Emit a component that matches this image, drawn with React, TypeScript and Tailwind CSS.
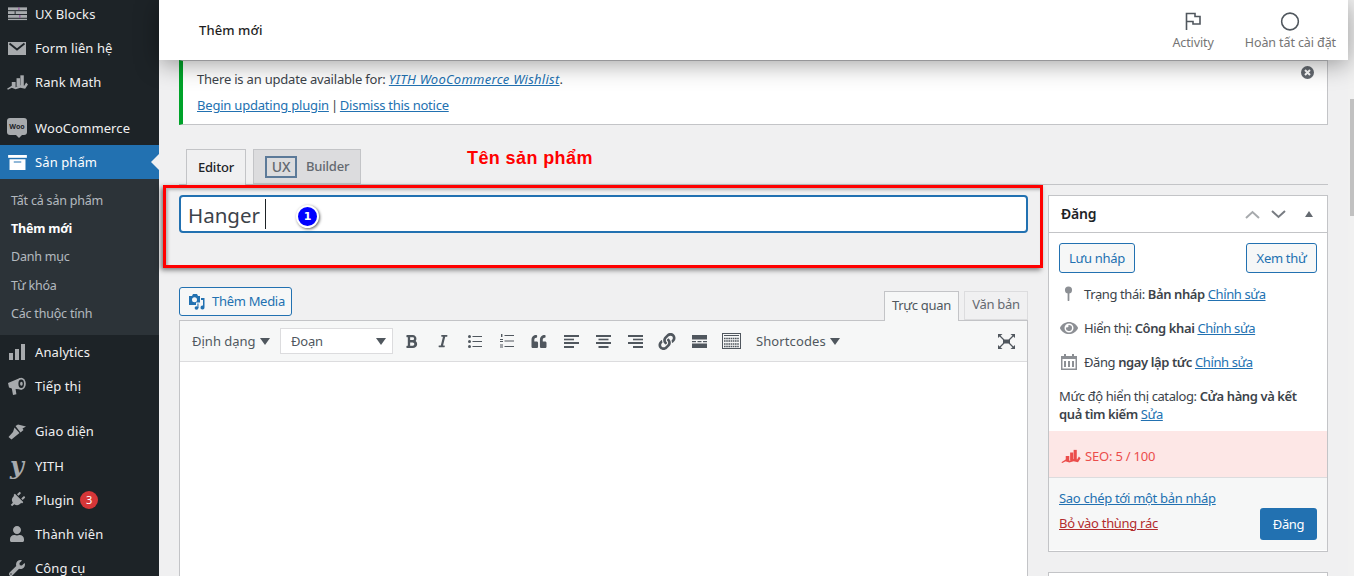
import React from "react";
import { FaBold, FaItalic, FaQuoteLeft, FaLink, FaEye, FaPlug, FaUser, FaWrench } from "react-icons/fa";

type IconProps = { className?: string };

const Bricks = ({ className }: IconProps) => (
  <svg viewBox="0 0 20 14" className={className} fill="currentColor">
    <rect x="0" y="0" width="20" height="3" />
    <rect x="0" y="4" width="20" height="3" />
    <rect x="0" y="8" width="20" height="3" />
    <rect x="0" y="12" width="20" height="1.4" />
    <rect x="11" y="0" width="1" height="3" fill="#8a3f96" />
    <rect x="7" y="4" width="1" height="3" fill="#1d2327" />
    <rect x="12" y="8" width="1" height="3" fill="#8a3f96" />
  </svg>
);
const Mail = ({ className }: IconProps) => (
  <svg viewBox="0 0 18 13" className={className}>
    <rect x="0" y="0" width="18" height="13" fill="currentColor" />
    <path d="M1.5 1.5 L9 7.5 L16.5 1.5" fill="none" stroke="#1d2327" strokeWidth="1.8" />
  </svg>
);
const RankMath = ({ className }: IconProps) => (
  <svg viewBox="0 0 22 16" className={className} fill="currentColor">
    <rect x="5" y="8" width="4" height="6" />
    <rect x="10" y="4" width="3.6" height="9" />
    <rect x="14" y="1" width="3.6" height="12" />
    <path d="M0 15 L5 12 L9 13.5 L14 11.5 L18 12 L20 8.5 L22 10.5 L19 15 L14 14 L9 15.5 L5 14 L1 16 Z" />
  </svg>
);
const Archive = ({ className }: IconProps) => (
  <svg viewBox="0 0 20 16" className={className} fill="currentColor">
    <rect x="0" y="0" width="20" height="3" />
    <path d="M1.5 4.5 H18.5 V16 H1.5 Z M6 7 V8 H14 V7 Z" fillRule="evenodd" />
  </svg>
);
const Bars = ({ className }: IconProps) => (
  <svg viewBox="0 0 17 17" className={className} fill="currentColor">
    <rect x="0" y="9" width="4" height="7" />
    <rect x="6" y="5" width="4" height="11" />
    <rect x="12" y="0" width="4" height="16" />
  </svg>
);
const Megaphone = ({ className }: IconProps) => (
  <svg viewBox="0 0 18 18" className={className}>
    <path fill="currentColor" d="M0 6 L12 1 L14 12.5 L7.6 12 L8.4 17.2 L5 18 L3.8 11.4 L1 10.5 Z" />
    <ellipse cx="13.2" cy="6.8" rx="4.6" ry="6" fill="currentColor" />
    <ellipse cx="13.2" cy="6.8" rx="2.8" ry="4.2" fill="#1d2327" />
    <ellipse cx="13.4" cy="6.8" rx="1.3" ry="2" fill="currentColor" />
  </svg>
);
const Brush = ({ className }: IconProps) => (
  <svg viewBox="0 0 18 16" className={className} fill="currentColor">
    <path d="M7.5 2 L10 0.5 L18 2.5 L14.5 4.5 L15.5 6 L12.5 8.5 Z" />
    <path d="M6.5 3.5 L11.5 9 L9 11 L3.5 15.5 L0.5 13 L5 8 Z" />
  </svg>
);
const Pin = ({ className }: IconProps) => (
  <svg viewBox="0 0 10 18" className={className} fill="currentColor">
    <circle cx="5" cy="4.5" r="4" />
    <rect x="4" y="7" width="2" height="10" rx="1" />
  </svg>
);
const Calendar = ({ className }: IconProps) => (
  <svg viewBox="0 0 16 16" className={className}>
    <path fill="currentColor" d="M0 2 H3 V0 H5 V2 H11 V0 H13 V2 H16 V16 H0 Z" />
    <rect x="1.5" y="5" width="13" height="9.5" fill="#fff" />
    <rect x="3" y="7" width="2" height="6" fill="currentColor" />
    <rect x="7" y="7" width="2" height="6" fill="currentColor" />
    <rect x="11" y="7" width="2" height="6" fill="currentColor" />
  </svg>
);
const Align = ({ kind }: { kind: "left" | "center" | "right" }) => {
  const short = kind === "left" ? 0 : kind === "right" ? 5 : 2.5;
  return (
    <svg viewBox="0 0 15 13" className="h-[13px] w-[15px]" fill="#50575e">
      <rect x="0" y="0" width="15" height="2" />
      <rect x={short} y="3.7" width="10" height="1.6" />
      <rect x="0" y="7" width="15" height="2" />
      <rect x={short} y="11" width="10" height="2" />
    </svg>
  );
};
const ListUl = () => (
  <svg viewBox="0 0 14 13" className="h-[13px] w-[14px]" fill="#50575e">
    <circle cx="1.5" cy="1.5" r="1.5" />
    <circle cx="1.5" cy="6.5" r="1.5" />
    <circle cx="1.5" cy="11.5" r="1.5" />
    <rect x="4.5" y="1" width="9.5" height="1" />
    <rect x="4.5" y="6" width="9.5" height="1" />
    <rect x="4.5" y="11" width="9.5" height="1" />
  </svg>
);
const ListOl = () => (
  <svg viewBox="0 0 14 14" className="h-[14px] w-[14px]" fill="#50575e">
    <rect x="1" y="0" width="1.4" height="3" />
    <rect x="0" y="5" width="3" height="1" />
    <rect x="0" y="7" width="3" height="1" />
    <rect x="0" y="10.5" width="3" height="1" />
    <rect x="0" y="12.5" width="3" height="1" />
    <rect x="4.5" y="1" width="9.5" height="1" />
    <rect x="4.5" y="6.5" width="9.5" height="1" />
    <rect x="4.5" y="12" width="9.5" height="1" />
  </svg>
);
const ReadMore = () => (
  <svg viewBox="0 0 15 13" className="h-[13px] w-[15px]" fill="#50575e">
    <rect x="0" y="0" width="15" height="4.5" />
    <rect x="0" y="6" width="4" height="1.2" />
    <rect x="5.5" y="6" width="4" height="1.2" />
    <rect x="11" y="6" width="4" height="1.2" />
    <rect x="0" y="8.5" width="15" height="4.5" />
  </svg>
);
const Kitchen = () => (
  <svg viewBox="0 0 19 16" className="h-[16px] w-[19px]">
    <rect x="0.5" y="0.5" width="18" height="15" fill="none" stroke="#50575e" />
    <rect x="2" y="2" width="15" height="1" fill="#50575e" />
    <path d="M2 5.5 H17 M2 8 H17 M2 11 H17 M2 13.5 H17" stroke="#50575e" strokeWidth="1.5" strokeDasharray="1.6 .6" />
  </svg>
);
const Fullscreen = () => (
  <svg viewBox="0 0 17 15" className="h-[15px] w-[17px]" fill="#50575e">
    <rect x="5" y="5.5" width="7" height="4" />
    <path d="M0 0 H4.5 L0 4 Z M17 0 H12.5 L17 4 Z M0 15 H4.5 L0 11 Z M17 15 H12.5 L17 11 Z" />
    <path d="M2 2 L6 6 M15 2 L11 6 M2 13 L6 9 M15 13 L11 9" stroke="#50575e" strokeWidth="1.2" />
  </svg>
);
const MediaIcon = () => (
  <svg viewBox="0 0 16 16" className="h-[16px] w-[16px]" fill="#2271b1">
    <path fillRule="evenodd" d="M0 2 H3 L4 0 H8 L9 2 H11 V8.5 H7 V11 H0 Z M5.5 3.2 A2.5 2.5 0 1 0 5.5 8.2 A2.5 2.5 0 1 0 5.5 3.2 Z" />
    <path d="M12 4 H15.5 V13.5 A2 2 0 1 1 14 11.6 V6 H12 Z" />
    <ellipse cx="7.5" cy="14" rx="1.9" ry="1.7" />
    <rect x="8.4" y="9.5" width="1.1" height="4.5" />
  </svg>
);
const Close = () => (
  <svg viewBox="0 0 13 13" className="h-[13px] w-[13px]">
    <circle cx="6.5" cy="6.5" r="6.5" fill="#646970" />
    <path d="M4 4 L9 9 M9 4 L4 9" stroke="#fff" strokeWidth="2" />
  </svg>
);
const Caret = ({ className }: IconProps) => (
  <div className={`h-0 w-0 border-x-[5px] border-t-[7px] border-x-transparent border-t-[#50575e] ${className ?? ""}`} />
);

const MenuRow = ({ icon, label, children, active, className }: {
  icon: React.ReactNode; label: string; children?: React.ReactNode; active?: boolean; className?: string;
}) => (
  <div className={`relative flex shrink-0 items-center tracking-[0.1px] ${className ?? "h-[34px]"} ${active ? "bg-[#2271b1] text-white" : "text-[#f0f0f1]"}`}>
    <div className={`flex w-[35px] items-center justify-center pr-[1px] ${active ? "text-white" : "text-[#a7aaad]"}`}>{icon}</div>
    <span>{label}</span>
    {children}
  </div>
);

const SubRow = ({ label, current, className }: { label: string; current?: boolean; className?: string }) => (
  <div className={`flex h-[28px] shrink-0 items-center pl-[11px] text-[12.5px] ${current ? "font-bold text-white" : "text-[#f0f6fcb3]"} ${className ?? ""}`}>{label}</div>
);

const Tool = ({ children }: { children: React.ReactNode }) => (
  <div className="flex h-[28px] w-[32px] shrink-0 items-center justify-center text-[#50575e]">{children}</div>
);

const MetaRow = ({ icon, children }: { icon: React.ReactNode; children: React.ReactNode }) => (
  <div className="flex h-[34px] items-center">
    <div className="flex w-[25px] shrink-0 items-center justify-center pr-[6px] text-[#8c8f94]">{icon}</div>
    <div className="whitespace-nowrap text-[#3c434a]">{children}</div>
  </div>
);

const Lnk = ({ children, className }: { children: React.ReactNode; className?: string }) => (
  <span className={`text-[#2271b1] underline ${className ?? ""}`}>{children}</span>
);

export default function App() {
  return (
    <div className="relative flex h-[576px] w-[1354px] overflow-hidden bg-[#f0f0f1] font-['Noto_Sans','Open_Sans',sans-serif] text-[13px] leading-[1.4] tracking-[-0.2px] text-[#3c434a]">
      {/* Sidebar */}
      <aside className="flex h-[600px] w-[159px] shrink-0 -translate-y-[3px] flex-col bg-[#1d2327]">
        <MenuRow icon={<Bricks className="h-[14px] w-[19px]" />} label="UX Blocks" />
        <MenuRow icon={<Mail className="h-[13px] w-[18px]" />} label="Form liên hệ" />
        <MenuRow icon={<RankMath className="h-[16px] w-[21px]" />} label="Rank Math" />
        <div className="h-[12px] shrink-0" />
        <MenuRow
          icon={
            <div className="relative -mt-[3px] flex h-[17px] w-[20px] items-center justify-center rounded-[3px] bg-[#a7aaad] text-[7px] font-bold text-[#1d2327]">
              Woo
              <div className="absolute -bottom-[3px] left-[9px] h-0 w-0 border-x-[3px] border-t-[3px] border-x-transparent border-t-[#a7aaad]" />
            </div>
          }
          label="WooCommerce"
        />
        <MenuRow active icon={<Archive className="h-[15px] w-[19px]" />} label="Sản phẩm">
          <div className="absolute right-0 top-[9px] h-0 w-0 border-y-[8px] border-r-[8px] border-y-transparent border-r-[#f0f0f1]" />
        </MenuRow>
        <div className="flex h-[156px] shrink-0 flex-col bg-[#2c3338] pt-[8px]">
          <SubRow label="Tất cả sản phẩm" />
          <SubRow label="Thêm mới" current />
          <SubRow label="Danh mục" />
          <SubRow label="Từ khóa" className="mt-[1px]" />
          <SubRow label="Các thuộc tính" />
        </div>
        <MenuRow icon={<Bars className="h-[17px] w-[17px]" />} label="Analytics" />
        <MenuRow icon={<Megaphone className="h-[18px] w-[18px]" />} label="Tiếp thị" />
        <div className="h-[11px] shrink-0" />
        <MenuRow className="h-[35px]" icon={<Brush className="h-[16px] w-[18px]" />} label="Giao diện" />
        <MenuRow
          icon={<span className="font-['DejaVu_Serif',serif] text-[24px] font-bold italic leading-none">y</span>}
          label="YITH"
        />
        <MenuRow icon={<FaPlug className="h-[16px] w-[16px] rotate-45" />} label="Plugin">
          <span className="ml-[6px] flex h-[18px] w-[18px] items-center justify-center rounded-full bg-[#d63638] text-[11px] text-white">3</span>
        </MenuRow>
        <MenuRow icon={<FaUser className="h-[16px] w-[16px]" />} label="Thành viên" />
        <MenuRow icon={<FaWrench className="h-[16px] w-[16px]" />} label="Công cụ" />
      </aside>

      {/* Main column */}
      <main className="flex w-[1189px] shrink-0 flex-col">
        <header className="relative z-10 flex h-[60px] shrink-0 items-center justify-between bg-white pl-[40px] pr-[12px] shadow-[0_4px_24px_rgba(0,0,0,0.38)]">
          <span className="text-[13px] font-medium tracking-[0.1px] text-[#1e1e1e]">Thêm mới</span>
          <div className="flex gap-[31px] text-[12.5px] tracking-[-0.1px] text-[#757575]">
            <div className="flex flex-col items-center">
              <svg viewBox="0 0 16 18" className="mb-[4px] mt-[3px] h-[18px] w-[16px]" fill="none" stroke="#50575e" strokeWidth="1.6">
                <path d="M1.5 18 V1.5 H10 V4.5 H15 V12 H8 V9.5 H1.5" />
              </svg>
              <span>Activity</span>
            </div>
            <div className="flex flex-col items-center">
              <svg viewBox="0 0 19 19" className="mb-[4px] mt-[3px] h-[19px] w-[19px] -translate-x-[0.5px]" fill="none" stroke="#50575e" strokeWidth="1.6">
                <circle cx="9.5" cy="9.5" r="8.4" />
              </svg>
              <span className="-mt-[1px]">Hoàn tất cài đặt</span>
            </div>
          </div>
        </header>

        <div className="flex flex-col px-[20px]">
          {/* Notice */}
          <div className="relative flex h-[65px] flex-col gap-[8px] border border-l-4 border-[#c3c4c7] border-l-[#00a32a] bg-white pl-[14px] pt-[9px]">
            <p>
              There is an update available for: <i className="font-normal tracking-[0.02em] text-[#2271b1] underline">YITH WooCommerce Wishlist</i>.
            </p>
            <p>
              <Lnk>Begin updating plugin</Lnk>
              <span className="mx-[2px]">|</span>
              <Lnk className="tracking-[-0.25px]">Dismiss this notice</Lnk>
            </p>
            <div className="absolute right-[13px] top-[5px]"><Close /></div>
          </div>

          {/* Editor tabs */}
          <div className="mt-[24px] flex h-[36px] items-start gap-[7px] border-b border-[#c3c4c7] pl-[7px]">
            <div className="flex h-[36px] w-[60px] items-center justify-center border border-b-0 border-[#c3c4c7] bg-[#f0f0f1] font-medium text-[#1d2327]">Editor</div>
            <div className="flex h-[35px] w-[108px] items-center gap-[9px] border border-[#c3c4c7] bg-[#dcdcde] pl-[11px] font-medium text-[#646970]">
              <span className="flex h-[22px] w-[32px] items-center justify-center border-2 border-[#5c7a99] text-[14px]">UX</span>
              <span>Builder</span>
            </div>
          </div>

          <div className="mt-[10px] flex items-start gap-[20px]">
            {/* Left column */}
            <div className="flex w-[849px] shrink-0 flex-col">
              <div className="flex h-[38px] items-center rounded-[4px] border-2 border-[#2271b1] bg-white pl-[7px]">
                <span className="translate-y-[1px] text-[20.5px] tracking-normal text-[#3c434a]">Hanger</span>
                <span className="ml-[5px] h-[30px] w-[1px] bg-[#1d2327]" />
              </div>

              <div className="mt-[54px] flex items-end justify-between">
                <div className="mb-[4px] flex h-[29px] w-[113px] items-center gap-[7px] rounded-[3px] border border-[#2271b1] bg-[#f6f7f7] pl-[9px] tracking-[-0.3px] text-[#2271b1]">
                  <MediaIcon />
                  <span>Thêm Media</span>
                </div>
                <div className="flex items-end gap-[5px] tracking-[-0.3px]">
                  <div className="relative -mb-[1px] flex h-[30px] w-[75px] items-center justify-center border border-b-0 border-[#c3c4c7] bg-[#f6f7f7] pb-[3px] text-[#50575e]">Trực quan</div>
                  <div className="flex h-[29px] w-[64px] items-center justify-center border border-[#dcdcde] bg-[#f0f0f1] pb-[2px] text-[#646970]">Văn bản</div>
                </div>
              </div>

              <div className="h-[260px] border border-[#c3c4c7] bg-white">
                <div className="flex h-[41px] items-center border-b border-[#dcdcde] bg-[#f6f7f7] pl-[12px] pr-[12px] text-[#50575e]">
                  <span className="w-[65px] whitespace-nowrap tracking-[0px]">Định dạng</span>
                  <Caret className="ml-[3px]" />
                  <div className="ml-[10px] flex h-[26px] w-[113px] items-center justify-between border border-[#dcdcde] bg-white pl-[10px] pr-[6px]">
                    <span>Đoạn</span>
                    <Caret />
                  </div>
                  <div className="ml-[2px] flex items-center">
                    <Tool><FaBold className="h-[15px] w-[13px]" /></Tool>
                    <Tool><FaItalic className="h-[14px] w-[12px]" /></Tool>
                    <Tool><ListUl /></Tool>
                    <Tool><ListOl /></Tool>
                    <Tool><FaQuoteLeft className="h-[15px] w-[16px]" /></Tool>
                    <Tool><Align kind="left" /></Tool>
                    <Tool><Align kind="center" /></Tool>
                    <Tool><Align kind="right" /></Tool>
                    <Tool><FaLink className="h-[17px] w-[18px]" /></Tool>
                    <Tool><ReadMore /></Tool>
                    <Tool><Kitchen /></Tool>
                  </div>
                  <span className="ml-[9px] tracking-[0.1px]">Shortcodes</span>
                  <Caret className="ml-[4px]" />
                  <div className="ml-auto"><Fullscreen /></div>
                </div>
              </div>
            </div>

            {/* Right column */}
            <div className="flex w-[280px] shrink-0 flex-col gap-[20px]">
              <div className="h-[357px] border border-[#c3c4c7] bg-white">
                <div className="flex h-[37px] items-center justify-between border-b border-[#c3c4c7] pl-[12px] pr-[14px]">
                  <span className="text-[14px] font-semibold text-[#1d2327]">Đăng</span>
                  <div className="flex items-center gap-[11px]">
                    <svg viewBox="0 0 15 9" className="h-[9px] w-[15px]" fill="none" stroke="#a7aaad" strokeWidth="2"><path d="M1 8 L7.5 2 L14 8" /></svg>
                    <svg viewBox="0 0 15 9" className="h-[9px] w-[15px]" fill="none" stroke="#787c82" strokeWidth="2"><path d="M1 1 L7.5 7 L14 1" /></svg>
                    <div className="ml-[8px] h-0 w-0 border-x-[4px] border-b-[6px] border-x-transparent border-b-[#646970]" />
                  </div>
                </div>
                <div className="flex h-[198px] flex-col px-[10px] pt-[10px] tracking-[-0.4px]">
                  <div className="mb-[4px] flex justify-between tracking-[-0.3px]">
                    <div className="flex h-[30px] w-[76px] items-center justify-center rounded-[3px] border border-[#2271b1] bg-[#f6f7f7] text-[#2271b1]">Lưu nháp</div>
                    <div className="flex h-[30px] w-[71px] items-center justify-center rounded-[3px] border border-[#2271b1] bg-[#f6f7f7] text-[#2271b1]">Xem thử</div>
                  </div>
                  <MetaRow icon={<Pin className="h-[16px] w-[9px]" />}>Trạng thái: <b className="font-semibold">Bản nháp</b> <Lnk>Chỉnh sửa</Lnk></MetaRow>
                  <MetaRow icon={<FaEye className="h-[16px] w-[18px]" />}>Hiển thị: <b className="font-semibold">Công khai</b> <Lnk>Chỉnh sửa</Lnk></MetaRow>
                  <MetaRow icon={<Calendar className="h-[16px] w-[16px]" />}>Đăng <b className="font-semibold">ngay lập tức</b> <Lnk>Chỉnh sửa</Lnk></MetaRow>
                  <p className="mt-[8px] leading-[18px]">Mức độ hiển thị catalog: <b className="font-semibold">Cửa hàng và kết quả tìm kiếm</b> <Lnk>Sửa</Lnk></p>
                </div>
                <div className="flex h-[47px] items-center gap-[4px] border-b border-[#dcdcde] bg-[#fde7e6] pl-[12px] pt-[4px] text-[#eb4d4b]">
                  <RankMath className="h-[14px] w-[20px]" />
                  <span>SEO: 5 / 100</span>
                </div>
                <div className="flex h-[72px] items-end justify-between bg-[#f6f7f7] pb-[10px] pl-[10px] pr-[10px] tracking-[-0.3px]">
                  <div className="flex flex-col gap-[7px] pb-[8px]">
                    <Lnk>Sao chép tới một bản nháp</Lnk>
                    <span className="text-[#b32d2e] underline">Bỏ vào thùng rác</span>
                  </div>
                  <div className="flex h-[32px] w-[57px] items-center justify-center rounded-[3px] bg-[#2271b1] text-white">Đăng</div>
                </div>
              </div>
              <div className="h-[40px] border border-[#c3c4c7] bg-white" />
            </div>
          </div>
        </div>
      </main>

      {/* Page scrollbar */}
      <div className="flex flex-1 justify-end bg-[#f1f1f1] pt-[99px]">
        <div className="h-[117px] w-[4px] bg-[#c1c1c1]" />
      </div>

      {/* Annotations placed over the page */}
      <div className="absolute left-[163px] top-[185px] h-[83px] w-[880px] border-[3px] border-[#ff0000] shadow-[-2px_2px_5px_rgba(0,0,0,0.5),inset_2px_2px_3px_rgba(0,0,0,0.25)]" />
      <div className="absolute left-[467px] top-[146px] font-['Liberation_Sans',sans-serif] text-[18px] font-bold tracking-[0.4px] text-[#ff0000]">Tên sản phẩm</div>
      <div className="absolute left-[296px] top-[205px] flex h-[23px] w-[23px] items-center justify-center rounded-full border-2 border-white bg-[#0000ff] font-['DejaVu_Sans',sans-serif] text-[11px] font-bold tracking-normal text-white shadow-[1px_1px_3px_rgba(0,0,0,0.6)]">1</div>
    </div>
  );
}
